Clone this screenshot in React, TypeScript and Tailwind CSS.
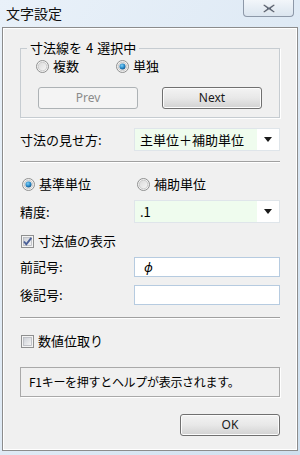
import React from "react";

const jp = { fontFamily: '"Noto Sans CJK JP", "Noto Sans", sans-serif' };

function Radio({ checked }: { checked?: boolean }) {
  return (
    <svg width="13" height="13" viewBox="0 0 13 13" className="shrink-0">
      <defs>
        <linearGradient id="rring" x1="0" y1="0" x2="1" y2="1">
          <stop offset="0" stopColor="#d9d9d9" />
          <stop offset="1" stopColor="#f7f7f7" />
        </linearGradient>
        <radialGradient id="rdot" cx="0.4" cy="0.35" r="0.7">
          <stop offset="0" stopColor="#7fd0f5" />
          <stop offset="0.6" stopColor="#2688c9" />
          <stop offset="1" stopColor="#114a79" />
        </radialGradient>
      </defs>
      <circle cx="6.5" cy="6.5" r="6" fill="#f4f4f4" stroke="#8e8f8f" strokeWidth="1" />
      <circle cx="6.5" cy="6.5" r="4.3" fill="url(#rring)" stroke="#c2c2c2" strokeWidth="0.8" />
      {checked && <circle cx="6.5" cy="6.5" r="3" fill="url(#rdot)" />}
    </svg>
  );
}

function Check({ checked }: { checked?: boolean }) {
  return (
    <svg width="13" height="13" viewBox="0 0 13 13" className="shrink-0">
      <defs>
        <linearGradient id="cbox" x1="0" y1="0" x2="1" y2="1">
          <stop offset="0" stopColor="#cbcfd5" />
          <stop offset="1" stopColor="#f6f6f6" />
        </linearGradient>
      </defs>
      <rect x="0.5" y="0.5" width="12" height="12" fill="#f4f4f4" stroke="#8e8f8f" />
      <rect x="2.5" y="2.5" width="8" height="8" fill="url(#cbox)" stroke="#b6b9bf" strokeWidth="0.8" />
      {checked && <path d="M3 6.5 L5.3 9.3 L10.3 2.8" fill="none" stroke="#4a5f97" strokeWidth="1.9" />}
    </svg>
  );
}

function WinButton({ label, disabled, className }: { label: string; disabled?: boolean; className?: string }) {
  return (
    <div
      className={
        "flex h-[22px] w-[100px] items-center justify-center rounded-[3px] border text-[12px] " +
        (disabled
          ? "border-[#adb2b5] bg-[#f4f4f4] text-[#8b8b8b] "
          : "border-[#707070] bg-gradient-to-b from-[#f3f3f3] via-[#e8e8e8] to-[#d2d2d2] text-[#1a1a1a] shadow-[inset_0_0_0_1px_#fcfcfc] ") +
        (className ?? "")
      }
      style={{ fontFamily: '"Noto Sans", sans-serif' }}
    >
      {label}
    </div>
  );
}

function Combo({ value }: { value: string }) {
  return (
    <div className="flex h-[23px] w-[146px] items-stretch border border-[#dfe5ea] bg-white">
      <div className="flex flex-1 items-center bg-[#effcee] pl-[5px] text-[13px] text-black">{value}</div>
      <div className="flex w-[22px] items-center justify-center">
        <svg width="8" height="5" viewBox="0 0 8 5">
          <path d="M0 0 H8 L4 5 Z" fill="#1a1a1a" />
        </svg>
      </div>
    </div>
  );
}

function TextBox({ value }: { value?: string }) {
  return (
    <div className="flex h-[20px] w-[146px] items-center border border-[#b6cbe0] bg-white pl-[9px] text-[13px] italic text-black">
      {value}
    </div>
  );
}

function Separator() {
  return <div className="h-[2px] border-t border-b border-t-[#a0a0a0] border-b-white" />;
}

export default function App() {
  return (
    <div className="relative h-[455px] w-[300px] overflow-hidden bg-gradient-to-br from-[#e9f1f9] via-[#dfeaf5] to-[#cfe0ef]" style={jp}>
      <div className="flex h-[27px] items-center pl-[6px] text-[14px] text-[#111]">文字設定</div>
      <div className="absolute right-[6px] top-0 flex h-[17px] w-[51px] items-center justify-center rounded-b-[4px] border border-t-0 border-[#8d98a8] bg-gradient-to-b from-[#f2f6fa] to-[#dbe5ef]">
        <svg width="14" height="11" viewBox="0 0 14 11">
          <path d="M2 1 L7 4.3 L12 1 L13 2.5 L9 5.5 L13 8.5 L12 10 L7 6.7 L2 10 L1 8.5 L5 5.5 L1 2.5 Z" fill="#5d6675" stroke="#ffffff" strokeWidth="0.6" />
        </svg>
      </div>

      <div className="mx-[2px] flex h-[424px] flex-col border border-[#8c8c8c] bg-[#f0f0f0] px-[17px] pt-[11px] shadow-[inset_0_0_0_1px_#ffffff]">
        <fieldset className="border border-[#c6ccd1] px-[15px] pb-[8px] shadow-[1px_1px_0_#ffffff]">
          <legend className="-ml-[9px] px-[3px] text-[13px] leading-[18px] text-black">
            寸法線を<span className="mx-[4px]">4</span>選択中
          </legend>
          <div className="flex h-[18px] items-center text-[13px]">
            <div className="flex w-[80px] items-center gap-[4px]">
              <Radio />
              <span>複数</span>
            </div>
            <div className="flex items-center gap-[4px]">
              <Radio checked />
              <span>単独</span>
            </div>
          </div>
          <div className="mt-[12px] flex gap-[24px] pl-[2px]">
            <WinButton label="Prev" disabled />
            <WinButton label="Next" />
          </div>
        </fieldset>

        <div className="mt-[10px] flex items-center justify-between text-[13px]">
          <span>寸法の見せ方:</span>
          <Combo value="主単位＋補助単位" />
        </div>

        <div className="mt-[10px]">
          <Separator />
        </div>

        <div className="mt-[12px] flex h-[18px] items-center pl-[2px] text-[13px]">
          <div className="flex w-[115px] items-center gap-[4px]">
            <Radio checked />
            <span>基準単位</span>
          </div>
          <div className="flex items-center gap-[4px]">
            <Radio />
            <span>補助単位</span>
          </div>
        </div>

        <div className="mt-[7px] flex items-center justify-between text-[13px]">
          <span>精度:</span>
          <Combo value=".1" />
        </div>

        <div className="mt-[9px] flex h-[18px] items-center gap-[4px] pl-[1px] text-[13px]">
          <Check checked />
          <span>寸法値の表示</span>
        </div>

        <div className="mt-[7px] flex items-center justify-between text-[13px]">
          <span>前記号:</span>
          <TextBox value="ϕ" />
        </div>

        <div className="mt-[8px] flex items-center justify-between text-[13px]">
          <span>後記号:</span>
          <TextBox />
        </div>

        <div className="mt-[12px]">
          <Separator />
        </div>

        <div className="mt-[13px] flex h-[18px] items-center gap-[4px] pl-[1px] text-[13px]">
          <Check />
          <span>数値位取り</span>
        </div>

        <div className="mt-[17px] flex h-[30px] items-center border border-[#a9a9a9] pl-[8px] text-[12px] tracking-[-0.3px] shadow-[1px_1px_0_#ffffff]">
          F1キーを押すとヘルプが表示されます。
        </div>

        <div className="mt-[17px] flex justify-end">
          <WinButton label="OK" />
        </div>
      </div>
    </div>
  );
}
